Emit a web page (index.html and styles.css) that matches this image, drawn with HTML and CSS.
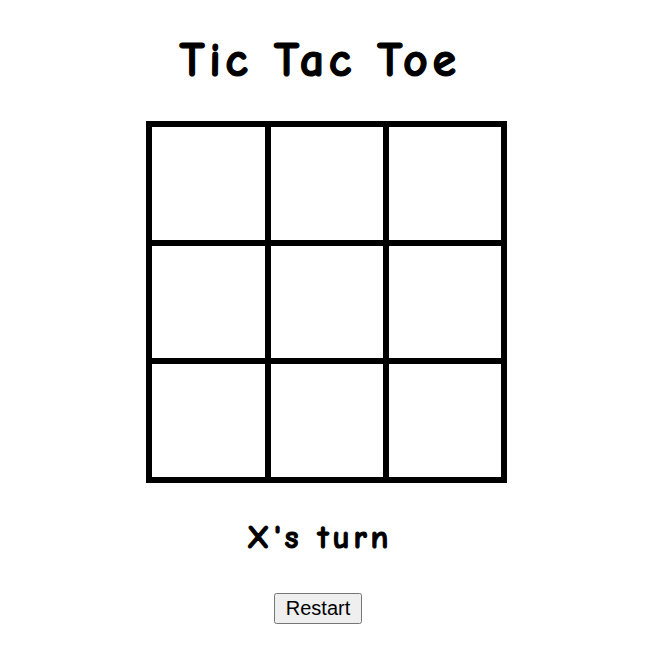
FILE: index.html
```html
<!DOCTYPE html>
<html lang="en">
<head>
<meta charset="utf-8">
<title>Tic Tac Toe</title>
<link rel="stylesheet" href="styles.css">
</head>
<body>
  <h1 class="title">Tic Tac Toe</h1>
  <div class="board">
    <div class="cell"></div>
    <div class="cell"></div>
    <div class="cell"></div>
    <div class="cell"></div>
    <div class="cell"></div>
    <div class="cell"></div>
    <div class="cell"></div>
    <div class="cell"></div>
    <div class="cell"></div>
  </div>
  <p class="status">X's turn</p>
  <button class="restart">Restart</button>
</body>
</html>
```

FILE: styles.css
```css
body {
  margin: 0;
  display: flex;
  flex-direction: column;
  align-items: center;
  font-family: "Comic Sans MS", "Comic Neue", "Open Sans", sans-serif;
  background: #fff;
  color: #000;
}
/* text sits a little left of the board's centre */
.title {
  font-size: 48px;
  line-height: 58px;
  margin: 32px 12px 31px 0;
  font-weight: bold;
  letter-spacing: 4.5px;
  -webkit-text-stroke: 1.2px #000;
}
/* black background shows through the gaps as grid lines */
.board {
  display: grid;
  grid-template-columns: 113px 112px 112px;
  grid-template-rows: 113px 112px 113px;
  gap: 6px;
  padding: 6px;
  background: #000;
}
.cell {
  background: #fff;
}
.status {
  font-size: 33px;
  font-weight: bold;
  line-height: 40px;
  margin: 34px 13px 0 0;
  letter-spacing: 3.8px;
  -webkit-text-stroke: 1px #000;
}
.restart {
  margin: 36px 16px 0 0;
  font-family: Arial, "Liberation Sans", sans-serif;
  font-size: 20px;
  padding: 2px 10px;
}
```
